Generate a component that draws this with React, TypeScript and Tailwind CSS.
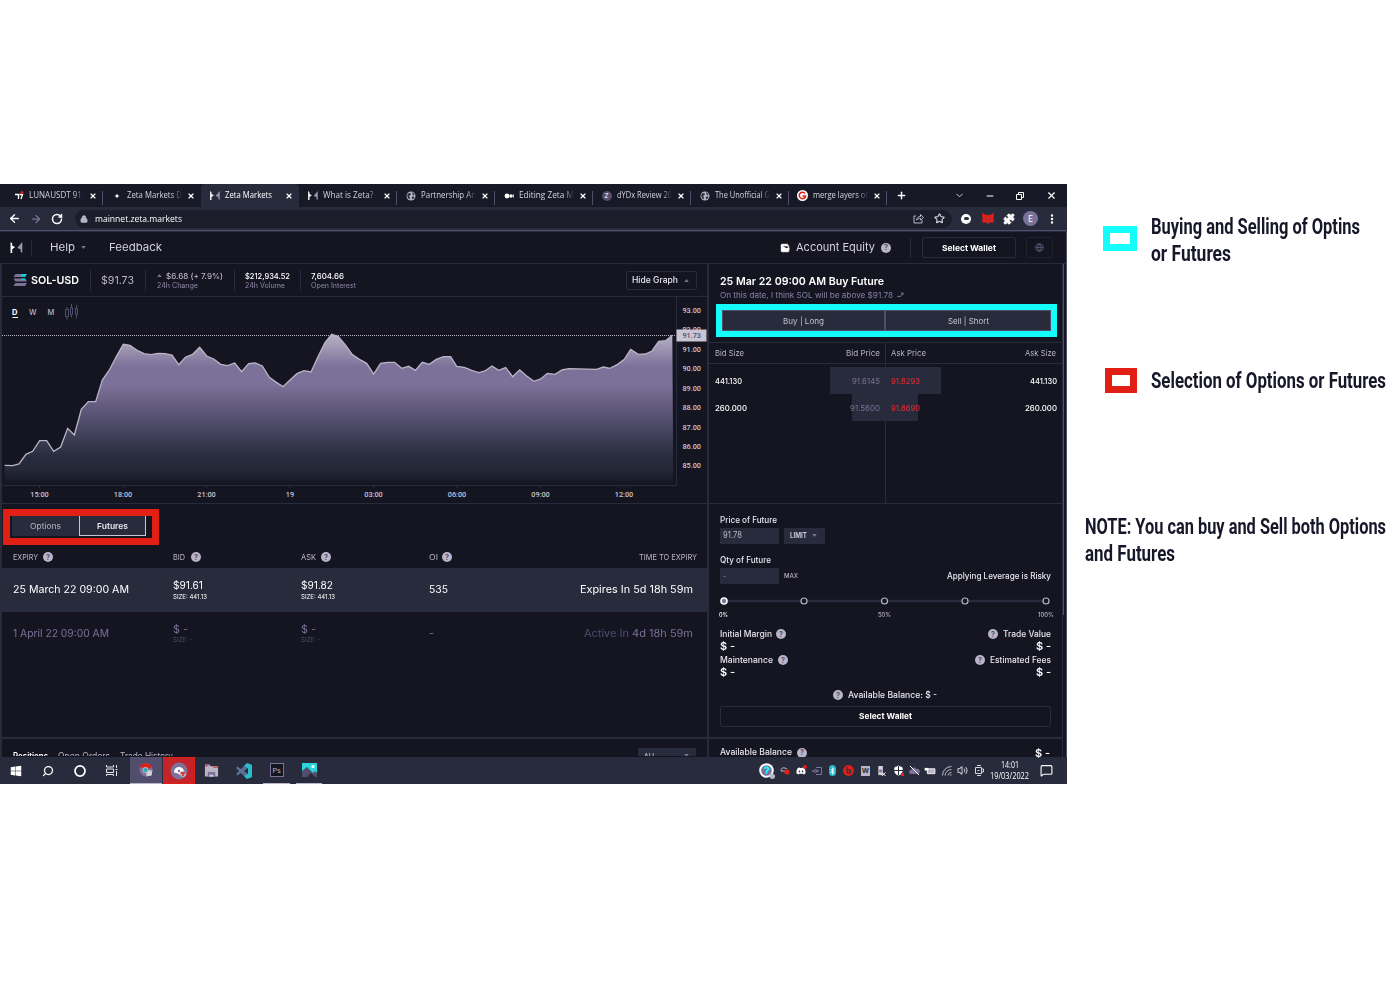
import React, { useLayoutEffect, useRef } from "react";
import {
  ArrowLeft, ArrowRight, RotateCw, Lock, Star, Puzzle, MoreVertical, ChevronDown,
  Minus, X, Plus, Globe, Search, Circle, MessageSquare, Volume2, Wallet, Shield,
} from "lucide-react";
import { FaWindows, FaDiscord, FaBluetoothB } from "react-icons/fa";

/* Single line of text stretched to the width of its box. */
function Fit({ className, children }: { className: string; children: React.ReactNode }) {
  const box = useRef<HTMLSpanElement>(null);
  const inner = useRef<HTMLSpanElement>(null);
  useLayoutEffect(() => {
    if (!box.current || !inner.current) return;
    const natural = inner.current.offsetWidth;
    inner.current.style.transform = "none";
    const real = inner.current.getBoundingClientRect().width || natural;
    inner.current.style.transform = `scaleX(${box.current.clientWidth / real})`;
  });
  return (
    <span ref={box} className={"block shrink-0 leading-none whitespace-nowrap " + className}>
      <span ref={inner} className="inline-block origin-left">{children}</span>
    </span>
  );
}

function Help({ className = "" }: { className?: string }) {
  return (
    <span className={"flex size-[10px] shrink-0 items-center justify-center rounded-full bg-[#b9b4c6] text-[7px] leading-none font-bold text-[#514d6c] " + className}>?</span>
  );
}

function Caret({ up = false, className = "" }: { up?: boolean; className?: string }) {
  return (
    <svg viewBox="0 0 6 4" className={"h-[3px] w-[5px] shrink-0 fill-[#7c7199] " + className}>
      <path d={up ? "M0 4L3 0l3 4z" : "M0 0h6L3 4z"} />
    </svg>
  );
}

function ZetaMark({ className }: { className: string }) {
  return (
    <svg viewBox="0 0 13 12" className={className}>
      <path d="M0 0l1.800 1.500V4L5 5.500 1.800 8v4H0z" fill="#fff" />
      <path d="M12.800 0v12l-1.800-1.500V8L7.300 6.500z" fill="#9d96b1" />
    </svg>
  );
}

function GlobeDot() {
  return (
    <svg viewBox="0 0 10 10" className="size-[10px]">
      <circle cx="5" cy="5" r="4.5" fill="#b9b4c6" />
      <path d="M1 4l2-2 2 .5-.5 1.5L3 5l1 1.500-.5 2L2 7zM6 1l2 1.500L8.500 4 7 4.500zM5.500 6L8 5.500l.5 1L6.500 8.500z" fill="#272b3b" />
    </svg>
  );
}

const tabs = [
  { t: "LUNAUSDT 91.", icon: "tv" },
  { t: "Zeta Markets D", icon: "spark" },
  { t: "Zeta Markets", icon: "zeta", active: true },
  { t: "What is Zeta? -", icon: "zeta" },
  { t: "Partnership An", icon: "globe" },
  { t: "Editing Zeta M", icon: "dots" },
  { t: "dYDx Review 20", icon: "z" },
  { t: "The Unofficial G", icon: "globe" },
  { t: "merge layers of", icon: "g" },
];

function TabIcon({ kind }: { kind: string }) {
  if (kind === "tv")
    return (
      <svg viewBox="0 0 10 10" className="size-[10px]">
        <path d="M1 3.500h3.500V8M5.500 3.500h3L7 8" stroke="#fff" strokeWidth="1.300" fill="none" />
        <circle cx="8" cy="1.500" r="1.500" fill="#e21f15" />
      </svg>
    );
  if (kind === "spark")
    return (
      <svg viewBox="0 0 10 10" className="size-[10px]"><path d="M5 2.500l.8 1.700 1.700.8-1.700.8L5 7.500l-.8-1.700L2.500 5l1.700-.8z" fill="#fff" /></svg>
    );
  if (kind === "zeta") return <ZetaMark className="h-[9px] w-[10px]" />;
  if (kind === "globe") return <GlobeDot />;
  if (kind === "dots")
    return (
      <svg viewBox="0 0 10 10" className="size-[10px]">
        <circle cx="3" cy="5" r="2.400" fill="#fff" /><circle cx="7" cy="5" r="1.700" fill="#fff" /><rect x="8.800" y="3.500" width="1" height="3" fill="#fff" />
      </svg>
    );
  if (kind === "z")
    return <span className="flex size-[10px] items-center justify-center rounded-full bg-[#514d6c] text-[7px] leading-none text-white">Z</span>;
  return (
    <svg viewBox="0 0 11 11" className="size-[11px]">
      <circle cx="5.500" cy="5.500" r="5.500" fill="#fff" />
      <path d="M8 3.500A3.200 3.200 0 1 0 8.600 6H5.500" stroke="#e21f15" strokeWidth="1.500" fill="none" />
    </svg>
  );
}

function BrowserChrome() {
  return (
    <div className="shrink-0 font-['Open_Sans','Noto_Sans',sans-serif]">
      <div className="flex h-[23px] items-stretch bg-[#171926] pl-[5px]">
        {tabs.map((tab, i) => (
          <div key={i} className={"flex w-[98px] shrink-0 items-center " + (tab.active ? "rounded-t-[4px] bg-[#272b3b]" : "")}>
            <span className="ml-[8px] flex w-[11px] justify-center"><TabIcon kind={tab.icon} /></span>
            <Fit className={tab.active ? "ml-[5px] w-[47px] text-[8.500px] font-medium text-white" : "ml-[5px] w-[55px] mask-r-from-82% text-[8.500px] font-medium text-[#d5d2de]"}>{tab.t}</Fit>
            <X className={"size-[8px] text-white " + (tab.active ? "ml-[13px]" : "ml-[5px]")} strokeWidth={3.5} />
            {!tab.active && i !== 1 && <span className="mt-[4px] ml-auto h-[14px] w-px bg-[#514d6c]" />}
          </div>
        ))}
        <div className="flex items-center text-white">
          <Plus className="ml-[9px] size-[11px]" strokeWidth={3} />
          <ChevronDown className="ml-[47px] size-[11px] text-[#d5d2de]" />
          <Minus className="ml-[20px] size-[10px]" strokeWidth={2.500} />
          <svg viewBox="0 0 8 8" className="ml-[21px] size-[8px] fill-none stroke-white"><path d="M.5 2.500h5v5h-5zM2.500 2.500v-2h5v5h-2" /></svg>
          <X className="ml-[22px] size-[11px]" strokeWidth={2.500} />
        </div>
      </div>
      <div className="flex h-[23px] items-center bg-[#272b3b]">
        <ArrowLeft className="ml-[8px] size-[13px] text-white" strokeWidth={2.500} />
        <ArrowRight className="ml-[9px] size-[12px] text-[#7c7199]" strokeWidth={2.500} />
        <RotateCw className="ml-[9px] size-[12px] text-white" strokeWidth={3} />
        <div className="ml-[12px] flex h-[18px] w-[877px] items-center rounded-full bg-[#1b1d2b]">
          <Lock className="ml-[5px] size-[8px] fill-[#b9b4c6] text-[#b9b4c6]" strokeWidth={2.500} />
          <Fit className="ml-[7px] w-[87px] text-[9px] font-medium text-white">mainnet.zeta.markets</Fit>
          <svg viewBox="0 0 11 11" className="ml-[731px] size-[11px] fill-none stroke-[#b9b4c6]"><path d="M3 3H1v7h8V7M3.500 7C4 4.500 5.500 3.500 7.500 3.500V1.500L10.500 4.500 7.500 7V5.500C6 5.500 4.500 6 3.500 7z" /></svg>
          <Star className="ml-[10px] size-[11px] text-[#d5d2de]" strokeWidth={2.500} />
        </div>
        <span className="ml-[9px] flex size-[10px] items-center justify-center rounded-full bg-white"><span className="h-[3px] w-[5px] rounded-full bg-[#272b3b]" /></span>
        <svg viewBox="0 0 12 11" className="ml-[11px] h-[11px] w-[12px]"><path d="M0 0l4 2h4l4-2-.5 6L12 9.500l-3.500 0L6 11 3.500 9.500 0 9.500l.5-3.500z" fill="#e21f15" /><path d="M3 6h2M7 6h2M4.500 9.500h3" stroke="#514d6c" /></svg>
        <Puzzle className="ml-[9px] size-[12px] fill-white text-white" />
        <span className="ml-[8px] flex size-[15px] items-center justify-center rounded-full bg-[#7c7199] text-[9px] leading-none text-white">E</span>
        <MoreVertical className="ml-[8px] size-[12px] text-white" strokeWidth={3} />
      </div>
      <div className="h-[2px] border-b border-[#272b3b] bg-[#514d6c]" />
    </div>
  );
}

function NavBar() {
  return (
    <div className="flex h-[32px] shrink-0 items-center border-b border-[#272b3b] text-[#d5d2de]">
      <ZetaMark className="ml-[10px] h-[11px] w-[13px]" />
      <span className="ml-[8px] h-[16px] w-px bg-[#272b3b]" />
      <Fit className="ml-[18px] w-[25px] text-[11px]">Help</Fit>
      <Caret className="ml-[6px]" />
      <Fit className="ml-[23px] w-[53px] text-[11px]">Feedback</Fit>
      <Wallet className="ml-[618px] size-[10px] fill-white text-white" />
      <Fit className="ml-[6px] w-[79px] text-[11px]">Account Equity</Fit>
      <Help className="ml-[6px]" />
      <span className="ml-[19px] h-[20px] w-px bg-[#272b3b]" />
      <div className="ml-[11px] flex h-[21px] w-[94px] items-center justify-center rounded-[2px] border border-[#272b3b]">
        <Fit className="w-[54px] text-[8px] font-bold text-white">Select Wallet</Fit>
      </div>
      <div className="ml-[10px] flex h-[21px] w-[27px] items-center justify-center rounded-[2px] border border-[#20222f]">
        <Globe className="size-[9px] text-[#514d6c]" strokeWidth={3} />
      </div>
    </div>
  );
}

function Stat({ value, label, className, vw, lw, arrow }: { value: string; label: string; className: string; vw: string; lw: string; arrow?: boolean }) {
  return (
    <div className={"flex shrink-0 flex-col gap-[2px] " + className}>
      <div className="flex items-center gap-[4px]">
        {arrow && <Caret up />}
        <Fit className={"text-[8px] font-medium " + vw}>{value}</Fit>
      </div>
      <Fit className={"text-[7px] text-[#9088a8] " + lw}>{label}</Fit>
    </div>
  );
}

function MarketHeader() {
  return (
    <div className="flex h-[33px] shrink-0 items-center border-b border-[#272b3b]">
      <svg viewBox="0 0 14 12" className="ml-[11px] h-[12px] w-[14px]">
        <path d="M2.500 0H14l-2 3H.5z" fill="#7c7199" /><path d="M8 0h6l-2 3H9z" fill="#13c9c9" />
        <path d="M.5 4.500H12l2 3H2.500z" fill="#7c7199" /><path d="M2.500 9H14l-2 3H.5z" fill="#7c7199" />
        <path d="M8 4.500h4l1 1.500H9z" fill="#13c9c9" />
      </svg>
      <Fit className="ml-[4px] w-[48px] text-[11px] font-semibold text-white">SOL-USD</Fit>
      <span className="ml-[11px] h-[21px] w-px bg-[#272b3b]" />
      <Fit className="ml-[10px] w-[33px] text-[11px] text-[#b9b4c6]">$91.73</Fit>
      <span className="ml-[11px] h-[21px] w-px bg-[#272b3b]" />
      <Stat arrow value="$6.68 (+ 7.9%)" label="24h Change" className="ml-[11px] w-[66px] text-[#b9b4c6]" vw="w-[57px]" lw="w-[41px]" />
      <span className="ml-[11px] h-[21px] w-px bg-[#272b3b]" />
      <Stat value="$212,934.52" label="24h Volume" className="ml-[10px] w-[45px] text-white" vw="w-[45px]" lw="w-[40px]" />
      <span className="ml-[10px] h-[21px] w-px bg-[#272b3b]" />
      <Stat value="7,604.66" label="Open Interest" className="ml-[10px] w-[45px] text-white" vw="w-[33px]" lw="w-[45px]" />
      <div className="ml-[270px] flex h-[19px] w-[71px] shrink-0 items-center rounded-[2px] border border-[#272b3b]">
        <Fit className="ml-[5px] w-[46px] text-[8.500px] font-medium text-[#e8e6ee]">Hide Graph</Fit>
        <Caret up className="ml-[6px]" />
      </div>
    </div>
  );
}

/* Price series, in thirds of a pixel. */
const series =
  "14,436 38,437 57,432 78,403 98,394 119,362 140,362 161,394 182,381 203,325 223,345 244,268 265,245 287,245 307,180 328,150 349,110 370,73 390,76 410,90 432,101 453,104 474,100 495,101 516,105 536,134 557,111 578,103 599,82 620,108 641,117 662,133 683,137 704,129 725,155 746,131 766,129 787,138 808,172 829,187 849,200 870,180 891,161 912,152 933,156 954,110 975,68 995,43 1015,50 1036,75 1057,104 1078,118 1100,130 1121,162 1142,130 1163,127 1184,127 1205,145 1226,139 1246,151 1267,127 1288,133 1309,118 1330,110 1352,110 1370,139 1393,142 1415,151 1436,158 1455,153 1476,138 1496,151 1517,143 1538,170 1559,150 1580,168 1602,184 1622,177 1642,160 1665,163 1686,150 1707,146 1790,148 1810,141 1830,145 1853,133 1873,118 1892,88 1915,103 1936,102 1956,93 1976,64 1997,62 2017,46";

function Chart() {
  const xs: [number, string][] = [[39.500, "15:00"], [123, "18:00"], [206.500, "21:00"], [290, "19"], [373.500, "03:00"], [457, "06:00"], [540.500, "09:00"], [624, "12:00"]];
  const ys = ["93.00", "92.00", "91.00", "90.00", "89.00", "88.00", "87.00", "86.00", "85.00"];
  return (
    <svg viewBox="2 297 705 206" className="h-[206px] w-[705px] shrink-0 font-[Roboto,sans-serif]">
      <defs>
        <linearGradient id="area" gradientUnits="userSpaceOnUse" x1="0" y1="40" x2="0" y2="495">
          <stop offset="0" stopColor="#b9b4c6" /><stop offset=".22" stopColor="#7c7199" /><stop offset=".34" stopColor="#7c7199" />
          <stop offset=".58" stopColor="#514d6c" /><stop offset=".82" stopColor="#272b3b" /><stop offset=".89" stopColor="#252939" /><stop offset="1" stopColor="#141521" />
        </linearGradient>
      </defs>
      <g transform="translate(0 320) scale(.33333)">
        <polygon points={`14,495 ${series} 2020,495`} fill="url(#area)" />
        <polyline points={series} fill="none" stroke="#b9b4c6" strokeWidth="4" />
      </g>
      <path d="M2 335.500H676" stroke="#b9b4c6" strokeDasharray="1 1" />
      <path d="M3 485.500H676.500V297" stroke="#272b3b" fill="none" />
      {xs.map(([x, t]) => (
        <g key={t}>
          <path d={`M${x} 485v3`} stroke="#272b3b" />
          <text x={x} y="497.200" fontSize="7.300" fontWeight="500" textAnchor="middle" fill="#c9c5d4">{t}</text>
        </g>
      ))}
      {ys.map((t, i) => (
        <text key={t} x="682.500" y={313 + i * 19.420} fontSize="7.300" fontWeight="500" textLength="18.500" fill="#c9c5d4">{t}</text>
      ))}
      <rect x="676.500" y="329.500" width="30" height="12" fill="#c9c5d4" />
      <text x="682.500" y="338.200" fontSize="7.300" fontWeight="500" textLength="18.500" fill="#514d6c">91.73</text>
      <g fontSize="7.500" fontWeight="500" fontFamily="Inter" fill="#b9b4c6">
        <text x="12" y="315" fill="#fff" fontWeight="700">D</text>
        <path d="M12.500 317.500h5.500" stroke="#fff" />
        <text x="29" y="315">W</text>
        <text x="47.500" y="315">M</text>
      </g>
      <path d="M65.500 309.500h3v7h-3zM67 307v2.500M67 316.500v3M70.500 307.500h2v7h-2zM71.500 304v3M71.500 314.500v3M75.500 308.500h2v6h-2zM76.500 305v3M76.500 314.500v4" stroke="#514d6c" fill="none" />
    </svg>
  );
}

function Quote({ price, size, className, pw, sw, dim }: { price: string; size: string; className: string; pw: string; sw: string; dim?: boolean }) {
  return (
    <div className={"flex shrink-0 flex-col " + className}>
      <Fit className={"text-[10.500px] " + pw}>{price}</Fit>
      <Fit className={"mt-[2px] text-[6.500px] " + sw + (dim ? " text-[#514d6c]" : "")}>{size}</Fit>
    </div>
  );
}

function ExpiryTable() {
  return (
    <div className="flex h-[233px] shrink-0 flex-col text-[#b9b4c6]">
      <div className="mt-[5px] ml-[1px] flex h-[36px] w-[156px] items-start border-[7px] border-[#e21f15] pl-[2px]">
        <div className="flex h-[20px] w-[67px] items-center justify-center bg-[#272b3b]"><Fit className="w-[31px] text-[8px]">Options</Fit></div>
        <div className="flex h-[20px] w-[67px] items-center justify-center border border-t-0 border-[#c9c5d4] bg-[#272b3b]"><Fit className="w-[31px] text-[8px] font-semibold text-[#e8e6ee]">Futures</Fit></div>
      </div>
      <div className="flex h-[23px] items-center pt-[1px] text-[8px]">
        <Fit className="ml-[11px] w-[25px]">EXPIRY</Fit><Help className="ml-[5px]" />
        <Fit className="ml-[120px] w-[12px]">BID</Fit><Help className="ml-[6px]" />
        <Fit className="ml-[100px] w-[15px]">ASK</Fit><Help className="ml-[5px]" />
        <Fit className="ml-[98px] w-[9px]">OI</Fit><Help className="ml-[4px]" />
        <Fit className="ml-[187px] w-[58px]">TIME TO EXPIRY</Fit>
      </div>
      <div className="flex h-[44px] items-center bg-[#272b3b] pt-[1px] text-[10.500px] text-white">
        <Fit className="ml-[11px] w-[116px]">25 March 22 09:00 AM</Fit>
        <Quote price="$91.61" size="SIZE: 441.13" className="ml-[44px] w-[35px]" pw="w-[30px]" sw="w-[34px]" />
        <Quote price="$91.82" size="SIZE: 441.13" className="ml-[93px] w-[35px]" pw="w-[32px]" sw="w-[34px]" />
        <Fit className="ml-[93px] w-[19px]">535</Fit>
        <Fit className="ml-[132px] w-[113px]">Expires In 5d 18h 59m</Fit>
      </div>
      <div className="flex h-[44px] items-center text-[10.500px] text-[#7c7199]">
        <Fit className="ml-[11px] w-[96px]">1 April 22 09:00 AM</Fit>
        <Quote dim price="$ -" size="SIZE: -" className="ml-[64px] w-[35px]" pw="w-[15px]" sw="w-[19px]" />
        <Quote dim price="$ -" size="SIZE: -" className="ml-[93px] w-[35px]" pw="w-[15px]" sw="w-[19px]" />
        <Fit className="ml-[93px] w-[5px]">-</Fit>
        <Fit className="ml-[150px] w-[109px]"><span className="text-[#514d6c]">Active In</span> 4d 18h 59m</Fit>
      </div>
    </div>
  );
}

function PositionsBar() {
  return (
    <div className="flex h-[19px] shrink-0 items-start overflow-hidden border-t-2 border-[#272b3b] text-[8.500px] text-[#b9b4c6]">
      <Fit className="mt-[13px] ml-[11px] w-[35px] font-semibold text-white">Positions</Fit>
      <Fit className="mt-[13px] ml-[10px] w-[52px]">Open Orders</Fit>
      <Fit className="mt-[13px] ml-[10px] w-[53px]">Trade History</Fit>
      <div className="mt-[9px] ml-[465px] flex h-[16px] w-[58px] shrink-0 items-start bg-[#272b3b]">
        <Fit className="mt-[4px] ml-[6px] w-[12px] text-[8px] font-semibold">ALL</Fit>
        <Caret className="mt-[6px] ml-[28px]" />
      </div>
    </div>
  );
}

function OrderBook() {
  return (
    <div className="flex h-[240px] shrink-0 flex-col border-b border-[#272b3b]">
      <div className="flex h-[40px] flex-col pl-[11px]">
        <Fit className="mt-[12px] w-[164px] text-[11px] font-semibold text-white">25 Mar 22 09:00 AM Buy Future</Fit>
        <div className="mt-[4px] flex items-center">
          <Fit className="w-[173px] text-[8px] text-[#8a81a5]">On this date, I think SOL will be above $91.78</Fit>
          <svg viewBox="0 0 7 6" className="ml-[4px] h-[6px] w-[7px] fill-none stroke-[#7c7199]"><path d="M0 5l2-1 1 1 3-4M4 1h2v2" /></svg>
        </div>
      </div>
      <div className="ml-[7px] flex h-[33px] w-[341px] border-[6px] border-[#13fdfb]">
        <div className="flex w-[163px] items-center justify-center border border-[#514d6c] bg-[#272b3b]"><Fit className="w-[41px] text-[8px] text-[#c9c5d4]">Buy | Long</Fit></div>
        <div className="flex flex-1 items-center justify-center border border-[#514d6c] bg-[#272b3b]"><Fit className="w-[41px] text-[8px] text-[#c9c5d4]">Sell | Short</Fit></div>
      </div>
      <div className="mt-[5px] flex h-[22px] shrink-0 items-center border-y border-[#272b3b] text-[8px] text-[#b9b4c6]">
        <Fit className="ml-[6px] w-[29px]">Bid Size</Fit>
        <Fit className="ml-[102px] w-[34px]">Bid Price</Fit>
        <span className="ml-[5px] h-full w-px bg-[#272b3b]" />
        <Fit className="ml-[5px] w-[35px]">Ask Price</Fit>
        <Fit className="ml-[99px] w-[31px]">Ask Size</Fit>
      </div>
      <div className="flex flex-1 text-[8px]">
        <div className="w-[176px] shrink-0 pt-[3px]">
          <div className="flex h-[27px] items-center"><Fit className="ml-[6px] w-[27px] font-medium text-white">441.130</Fit>
            <div className="ml-auto flex h-full w-[55px] items-center justify-end bg-[#272b3b] pr-[5px]"><Fit className="w-[28px] text-[#7c7199]">91.6145</Fit></div></div>
          <div className="flex h-[27px] items-center"><Fit className="ml-[6px] w-[32px] font-medium text-white">260.000</Fit>
            <div className="ml-auto flex h-full w-[33px] items-center justify-end bg-[#272b3b] pr-[5px]"><Fit className="w-[30px] text-[#7c7199]">91.5600</Fit></div></div>
        </div>
        <span className="w-px bg-[#272b3b]" />
        <div className="w-[171px] shrink-0 pt-[3px]">
          <div className="flex h-[27px] items-center"><div className="flex h-full w-[55px] items-center bg-[#272b3b] pl-[5px]"><Fit className="w-[29px] font-medium text-[#e02a32]">91.8293</Fit></div>
            <Fit className="ml-auto w-[27px] font-medium text-white">441.130</Fit></div>
          <div className="flex h-[27px] items-center"><div className="flex h-full w-[32px] items-center bg-[#272b3b] pl-[5px]"><Fit className="w-[29px] font-medium text-[#e02a32]">91.8690</Fit></div>
            <Fit className="ml-auto w-[32px] font-medium text-white">260.000</Fit></div>
        </div>
      </div>
    </div>
  );
}

function OrderForm() {
  return (
    <div className="flex h-[233px] w-[353px] shrink-0 flex-col pr-[11px] pl-[11px] text-[8.500px] font-medium text-[#e8e6ee]">
      <Fit className="mt-[12px] w-[57px] text-[8.500px]">Price of Future</Fit>
      <div className="mt-[3px] flex h-[16px]">
        <div className="flex w-[59px] items-center bg-[#272b3b] pl-[3px]"><Fit className="w-[19px] font-normal text-[#b9b4c6]">91.78</Fit></div>
        <div className="ml-[5px] flex w-[41px] items-center bg-[#272b3b] pl-[6px]"><Fit className="w-[17px] text-[7px] font-bold text-[#c9c5d4]">LIMIT</Fit><Caret className="ml-[5px]" /></div>
      </div>
      <Fit className="mt-[12px] w-[51px]">Qty of Future</Fit>
      <div className="mt-[4px] flex h-[16px] items-center">
        <div className="flex h-full w-[59px] items-center bg-[#272b3b] pl-[3px] text-[#7c7199]"><Fit className="w-[3px]">-</Fit></div>
        <Fit className="ml-[5px] w-[14px] text-[6.500px] text-[#b9b4c6]">MAX</Fit>
        <Fit className="ml-auto w-[104px]">Applying Leverage is Risky</Fit>
      </div>
      <svg viewBox="720 596 331 10" className="mt-[12px] h-[10px] w-[331px] shrink-0 overflow-visible">
        <path d="M724 601h322" stroke="#272b3b" strokeWidth="2.500" />
        <circle cx="724" cy="601" r="3" fill="#7c7199" stroke="#fff" strokeWidth="1.600" />
        {[804, 884.500, 965, 1046].map((x) => <circle key={x} cx={x} cy="601" r="3" fill="#141521" stroke="#b9b4c6" strokeWidth="1.200" />)}
      </svg>
      <div className="mt-[6px] -mr-[3px] -ml-[1px] flex text-[6.500px] text-[#b9b4c6]">
        <Fit className="w-[9px] text-white">0%</Fit><Fit className="ml-[150px] w-[13px]">50%</Fit><Fit className="ml-auto w-[16px]">100%</Fit>
      </div>
      <div className="mt-[11px] flex h-[9px] items-center"><Fit className="w-[52px]">Initial Margin</Fit><Help className="ml-[4px]" /><Help className="mr-[5px] ml-auto" /><Fit className="w-[48px]">Trade Value</Fit></div>
      <div className="mt-[2px] flex justify-between text-[10px] font-semibold text-white"><Fit className="w-[15px]">$ -</Fit><Fit className="w-[15px]">$ -</Fit></div>
      <div className="mt-[5px] flex h-[9px] items-center"><Fit className="w-[53px]">Maintenance</Fit><Help className="ml-[5px]" /><Help className="mr-[5px] ml-auto" /><Fit className="w-[61px]">Estimated Fees</Fit></div>
      <div className="mt-[2px] flex justify-between text-[10px] font-semibold text-white"><Fit className="w-[15px]">$ -</Fit><Fit className="w-[15px]">$ -</Fit></div>
      <div className="mt-[14px] flex h-[9px] items-center"><Help className="ml-[113px]" /><Fit className="ml-[5px] w-[89px]">Available Balance: $ -</Fit></div>
      <div className="mt-[6px] flex h-[21px] shrink-0 items-center justify-center rounded-[2px] border border-[#272b3b]"><Fit className="w-[53px] text-[8px] font-bold text-white">Select Wallet</Fit></div>
    </div>
  );
}

function TaskIcons() {
  return (
    <>
      <FaWindows className="ml-[10px] size-[12px] text-white" />
      <Search className="ml-[20px] size-[12px] text-white" strokeWidth={2.500} transform="scale(-1 1)" />
      <Circle className="ml-[20px] size-[12px] text-white" strokeWidth={3.500} />
      <svg viewBox="0 0 12 11" className="ml-[20px] h-[11px] w-[12px] fill-none stroke-[#e8e6ee]"><path d="M.5 0v2h7V0M.5 4h7v3.500h-7zM.5 11V9.500h7V11M10.500 0v3M10.500 6v5M9.500 4.500h2" /></svg>
      <div className="ml-[12px] flex h-full w-[32px] items-center justify-center border-b border-[#b9b4c6] bg-[#514d6c]">
        <svg viewBox="0 0 14 14" className="size-[14px]">
          <circle cx="7" cy="7" r="6.500" fill="#7c7199" /><path d="M7 7L1 3.500A7 7 0 0 1 13 4z" fill="#e21f15" /><path d="M7 7h6.500A6.500 6.500 0 0 1 7 13.500z" fill="#b9b4c6" /><circle cx="6.500" cy="7" r="3" fill="#b9b4c6" /><circle cx="6.500" cy="7" r="2" fill="#28a9b5" /><circle cx="10.500" cy="10.500" r="2.500" fill="#d5d2de" />
        </svg>
      </div>
      <div className="ml-[1px] flex h-full w-[32px] items-center justify-center border border-[#e21f15] bg-[#c4232a]">
        <svg viewBox="0 0 18 18" className="size-[18px]"><circle cx="9" cy="9" r="8.500" fill="#7c7199" /><path d="M4 10.500a5 5 0 0 1 10-1l2 3.500H10L8 11.500z" fill="#fff" /><circle cx="9" cy="9" r="1.200" fill="#7c7199" /><circle cx="13" cy="12" r="3" fill="#b9b4c6" /><path d="M10.500 11h5M13 11v3" stroke="#e21f15" strokeWidth="1.500" /></svg>
      </div>
      <svg viewBox="0 0 16 13" className="ml-[9px] h-[13px] w-[15px]"><path d="M1 0h5l1 2h8v11H1z" fill="#b9b4c6" /><path d="M1 1.500h4M10 3h5" stroke="#e21f15" /><path d="M4 8h8v5H4z" fill="#7c7199" /><path d="M6 11h4v2H6z" fill="#d5d2de" /></svg>
      <svg viewBox="0 0 16 16" className="ml-[17px] size-[16px]"><path d="M11 0l5 2v12l-5 2-6-6-3.500 2.500L0 11l3-3-3-3 1.500-1.500L5 6zM12 5L8 8l4 3z" fill="#5d6f93" fillRule="evenodd" /><path d="M11 0l5 2v12l-5 2-3-3 4-2V5L8 3z" fill="#1fd0da" opacity=".8" /></svg>
      <div className="ml-[11px] flex h-full w-[27px] items-center justify-center border-b border-[#b9b4c6]"><span className="flex size-[14px] items-center justify-center border border-[#7c7199] bg-[#141521] text-[8px] leading-none text-[#b9b4c6]">Ps</span></div>
      <div className="ml-[6px] flex h-full w-[26px] items-center justify-center border-b border-[#b9b4c6]">
        <svg viewBox="0 0 15 14" className="h-[14px] w-[15px]"><path d="M0 0h15v14H0z" fill="#2cd5dc" /><path d="M0 8l5-4 6 6 2-2 2 2v4H0z" fill="#514d6c" /><path d="M5 14l4-4 4 4z" fill="#272b3b" /><circle cx="11" cy="3.500" r="1.500" fill="#fff" /></svg>
      </div>
    </>
  );
}

function Tray() {
  return (
    <div className="ml-auto flex h-full w-[308px] shrink-0 items-center text-[#d5d2de]">
      <svg viewBox="0 0 15 15" className="size-[16px]"><circle cx="7" cy="7" r="6.800" fill="#fff" /><circle cx="7" cy="7" r="5" fill="#7c7199" /><path d="M5 5.500Q7 2.500 9 5.500L7 8v2" stroke="#13fdfb" strokeWidth="1.700" fill="none" /><circle cx="12.500" cy="12.500" r="2.500" fill="#b9b4c6" /></svg>
      <svg viewBox="0 0 10 9" className="ml-[5px] h-[9px] w-[10px]"><path d="M1 5q0-4 4-3l2 1M1 5h4" stroke="#b9b4c6" fill="none" /><circle cx="7" cy="6" r="2.600" fill="#e21f15" /></svg>
      <span className="relative ml-[6px] size-[10px]"><FaDiscord className="size-[10px] text-white" /><span className="absolute -top-[1px] -right-[1px] size-[4px] rounded-full bg-[#e21f15]" /></span>
      <svg viewBox="0 0 10 8" className="ml-[6px] h-[8px] w-[10px] fill-none stroke-[#7c7199]"><path d="M4 .5h5.500v7H4M.5 4q3-3 6 0-3 3-6 0M3 4h2" /></svg>
      <span className="ml-[7px] flex h-[11px] w-[7px] items-center justify-center rounded-full bg-[#26b9c7]"><FaBluetoothB className="size-[8px] text-white" /></span>
      <svg viewBox="0 0 11 11" className="ml-[7px] size-[11px]"><circle cx="5.500" cy="5.500" r="5.400" fill="#e21f15" /><path d="M4 2v6h3.500V5H4" stroke="#272b3b" fill="none" /></svg>
      <span className="ml-[7px] flex h-[10px] w-[9px] items-center justify-center bg-[#b9b4c6] text-[7px] leading-none font-bold text-[#272b3b]">W</span>
      <svg viewBox="0 0 9 11" className="ml-[7px] h-[10px] w-[9px]"><path d="M1 0h5v10H1z" fill="#d5d2de" /><path d="M5 7l4 4M9 7l-4 4" stroke="#fff" /><path d="M2 4h3v3H2z" fill="#7c7199" /></svg>
      <span className="relative ml-[7px] size-[11px]"><Shield className="size-[11px] fill-white text-white" /><span className="absolute top-[1px] left-[5px] h-[9px] w-px bg-[#272b3b]" /><span className="absolute top-[5px] left-[1px] h-px w-[9px] bg-[#272b3b]" /><span className="absolute right-0 bottom-0 size-[3px] bg-[#e21f15]" /></span>
      <svg viewBox="0 0 11 9" className="ml-[5px] h-[9px] w-[11px]"><path d="M2 8a2 2 0 0 1 0-4 3 3 0 0 1 5.500-1A2.500 2.500 0 0 1 9 8z" fill="#7c7199" /><path d="M1 0l9 9" stroke="#fff" /></svg>
      <svg viewBox="0 0 12 9" className="ml-[4px] h-[8px] w-[12px]"><path d="M3 2h8.500v5.500H3z" fill="#b9b4c6" stroke="#fff" /><path d="M0 1h4v3H0z" fill="#fff" /></svg>
      <svg viewBox="0 0 10 10" className="ml-[6px] size-[10px] fill-none stroke-[#b9b4c6]"><path d="M.5 9.500A9 9 0 0 1 9.500 .5M3 9.500A6.500 6.500 0 0 1 9.500 3.500M6 9.500A3.500 3.500 0 0 1 9.500 6.500M8 9h1.500" /></svg>
      <Volume2 className="ml-[5px] size-[11px] text-[#b9b4c6]" strokeWidth={2.500} />
      <svg viewBox="0 0 9 11" className="ml-[7px] h-[11px] w-[9px] fill-none stroke-[#d5d2de]"><path d="M.5 2.500h6v6h-6zM2 .5h4M2 10.500h4M6.500 4h2v3h-2M2.500 5.500h2" /></svg>
      <div className="ml-[6px] flex w-[39px] flex-col items-center gap-[3px] text-[8.500px] text-white">
        <Fit className="w-[18px]">14:01</Fit><Fit className="w-[39px]">19/03/2022</Fit>
      </div>
      <MessageSquare className="ml-[11px] size-[13px] text-white" />
    </div>
  );
}

function Taskbar() {
  return (
    <div className="flex h-[27px] w-full shrink-0 items-center bg-[#272b3b] font-['Open_Sans','Noto_Sans',sans-serif]">
      <TaskIcons />
      <Tray />
    </div>
  );
}

function Legend() {
  return (
    <div className="flex flex-col pl-[18px] font-[Roboto,sans-serif] text-[22px] font-bold text-[#17172a]">
      <div className="mt-[32px] flex h-[54px] items-start">
        <span className="mt-[10px] ml-[18px] h-[25px] w-[34px] border-[7px] border-[#13fdfb]" />
        <div className="ml-[14px] flex flex-col gap-[5px]"><Fit className="w-[209px]">Buying and Selling of Optins</Fit><Fit className="w-[80px]">or Futures</Fit></div>
      </div>
      <div className="mt-[98px] flex h-[25px] items-center">
        <span className="ml-[20px] h-[25px] w-[32px] border-[7px] border-[#e21f15]" />
        <Fit className="ml-[14px] w-[235px]">Selection of Options or Futures</Fit>
      </div>
      <div className="mt-[123px] flex flex-col gap-[5px]"><Fit className="w-[301px]">NOTE: You can buy and Sell both Options</Fit><Fit className="w-[90px]">and Futures</Fit></div>
    </div>
  );
}

export default function App() {
  return (
    <div className="flex h-[1000px] w-[1400px] items-start overflow-hidden bg-white pt-[184px] font-[Inter,sans-serif]">
      <div className="flex h-[600px] w-[1067px] shrink-0 flex-col overflow-hidden bg-[#141521]">
        <BrowserChrome />
        <div className="flex h-[525px] flex-col border-r border-[#514d6c]">
          <NavBar />
          <div className="flex h-[493px]">
            <div className="flex w-[707px] shrink-0 flex-col border-l-2 border-[#272b3b]">
              <MarketHeader />
              <Chart />
              <div className="h-px shrink-0 bg-[#272b3b]" />
              <ExpiryTable />
              <PositionsBar />
            </div>
            <div className="flex w-[356px] shrink-0 flex-col border-r border-l-2 border-[#272b3b]">
              <OrderBook />
              <OrderForm />
              <div className="flex h-[20px] shrink-0 items-center border-t-2 border-[#272b3b] pt-[9px] pl-[11px] text-[8.500px] font-medium text-[#e8e6ee]">
                <Fit className="w-[72px]">Available Balance</Fit><Help className="ml-[5px]" /><Fit className="ml-[228px] w-[15px] text-[10px] font-semibold text-white">$ -</Fit>
              </div>
            </div>
            <div className="h-[351px] w-px bg-[#514d6c]" />
          </div>
        </div>
        <Taskbar />
      </div>
      <Legend />
    </div>
  );
}
